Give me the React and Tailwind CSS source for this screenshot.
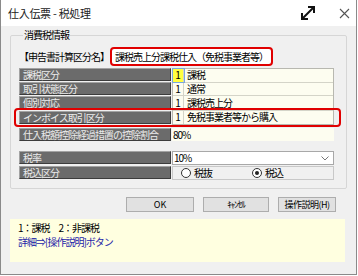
import React from 'react';

const font = { fontFamily: '"Noto Sans CJK JP", "Noto Sans", sans-serif' };

const Label = ({ children }) => (
  <div className="w-[152px] h-[13px] shrink-0 flex items-center pl-[3px] bg-[#6b6b6b] border border-t-[#a3a3a3] border-l-[#a3a3a3] border-b-[#3c3c3c] border-r-[#3c3c3c] text-[#ececec] text-[10px] tracking-[-1px] leading-none">
    {children}
  </div>
);

const CodeRow = ({ code, text, focused, tall }) => (
  <div className={`flex ${tall ? 'h-[15px]' : 'h-[14px]'} border-b border-[#d4d4c8] last:border-b-0`}>
    <div
      className={`w-[11px] shrink-0 flex items-center justify-center border-r border-[#d4d4c8] text-[10px] leading-none ${
        focused ? 'bg-[#ffff40] outline outline-1 outline-[#7aa7dc]' : ''
      }`}
    >
      {code}
    </div>
    <div className="flex-1 flex items-center pl-[3px] text-[10px] tracking-[-1px] leading-none">{text}</div>
  </div>
);

const MaxIcon = () => (
  <svg width="18" height="18" viewBox="0 0 18 18" fill="none" stroke="#111" strokeWidth="2">
    <path d="M3 15 L15 3" />
    <path d="M9 3 H15 V9" />
    <path d="M3 9 V15 H9" />
  </svg>
);

const CloseIcon = () => (
  <svg width="11" height="11" viewBox="0 0 11 11" stroke="#555" strokeWidth="1.1">
    <path d="M1 1 L10 10 M10 1 L1 10" />
  </svg>
);

export default function App() {
  return (
    <div className="w-[358px] h-[276px] bg-white text-black" style={font}>
      <div className="w-[357px] h-[275px] flex flex-col border-l border-r border-b border-[#8a8a8a]">
        {/* Title bar */}
        <div className="h-[26px] shrink-0 bg-white flex items-center pl-[7px] pr-[6px]">
          <span className="text-[11px] tracking-[-0.3px] text-[#222]">仕入伝票 - 税処理</span>
          <div className="ml-auto flex items-center gap-[22px]">
            <MaxIcon />
            <CloseIcon />
          </div>
        </div>

        {/* Body */}
        <div className="flex-1 bg-[#f0f0f0] flex flex-col px-[9px]">
          <fieldset className="mt-[3px] border border-[#d6d6d6] rounded-[2px] h-[160px] pl-[8px] pr-[12px]">
            <legend className="ml-[4px] px-[1px] text-[10px] tracking-[-1px] leading-[12px]">消費税情報</legend>

            <div className="flex items-center h-[19px] mt-[6px]">
              <span className="text-[10px] tracking-[-1px] leading-none">【申告書計算区分名】</span>
              <div className="ml-[1px] h-[19px] px-[3px] flex items-center border-2 border-[#e00000] rounded-[4px] bg-white text-[10px] tracking-[-1px] leading-none">
                課税売上分課税仕入（免税事業者等）
              </div>
            </div>

            <div className="mt-[2px] flex">
              <div className="flex flex-col gap-[1px]">
                <Label>課税区分</Label>
                <Label>取引状態区分</Label>
                <Label>個別対応</Label>
                <div className="relative mt-[1px]">
                  <Label>インボイス取引区分</Label>
                  <div className="absolute left-[-5px] top-[-3px] w-[327px] h-[19px] border-2 border-[#e00000] rounded-[4px] pointer-events-none z-10" />
                </div>
              </div>
              <div className="flex-1 ml-[1px] h-[57px] bg-[#fdfdf0] border border-[#b8b8b0] flex flex-col">
                <CodeRow code="1" text="課税" focused />
                <CodeRow code="1" text="通常" />
                <CodeRow code="1" text="課税売上分" tall />
                <CodeRow code="1" text="免税事業者等から購入" />
              </div>
            </div>

            <div className="mt-[3px] flex">
              <Label>仕入税額控除経過措置の控除割合</Label>
              <div className="flex-1 ml-[1px] bg-[#fdfdf0] flex items-center pl-[1px] text-[10px] tracking-[-1px] leading-none">80%</div>
            </div>

            <div className="mt-[10px] flex flex-col gap-[1px]">
              <div className="flex">
                <Label>税率</Label>
                <div className="flex-1 ml-[1px] h-[14px] bg-white border border-[#a8a8a8] flex items-center pl-[1px] pr-[4px] text-[10px] tracking-[-1px] leading-none">
                  10%
                  <svg className="ml-auto" width="8" height="5" viewBox="0 0 8 5" fill="none" stroke="#777" strokeWidth="1">
                    <path d="M0.5 0.5 L4 4 L7.5 0.5" />
                  </svg>
                </div>
              </div>
              <div className="flex">
                <Label>税込区分</Label>
                <div className="flex-1 ml-[1px] h-[14px] border border-[#c8c8c8] flex items-center pl-[8px] text-[10px] tracking-[-1px] leading-none">
                  <span className="w-[10px] h-[10px] rounded-full border border-[#333] bg-white" />
                  <span className="ml-[3px]">税抜</span>
                  <span className="ml-[40px] w-[10px] h-[10px] rounded-full border border-[#333] bg-white flex items-center justify-center">
                    <span className="w-[4px] h-[4px] rounded-full bg-[#222]" />
                  </span>
                  <span className="ml-[3px]">税込</span>
                </div>
              </div>
            </div>
          </fieldset>

          {/* Buttons */}
          <div className="mt-[8px] flex justify-end gap-[9px] pr-[11px]">
            <button className="w-[68px] h-[15px] bg-[#e1e1e1] border border-[#adadad] text-[9px] leading-none">OK</button>
            <button className="w-[66px] h-[15px] bg-[#e1e1e1] border border-[#adadad] text-[9px] leading-none tracking-[-1px]">ｷｬﾝｾﾙ</button>
            <button className="w-[58px] h-[15px] bg-[#e1e1e1] border border-[#adadad] text-[9px] leading-none tracking-[-0.5px]">操作説明(H)</button>
          </div>

          {/* Help */}
          <div className="mt-[7px] w-[335px] h-[43px] bg-[#ffffe0] pl-[8px] pt-[2px] text-[10px] tracking-[-1px] leading-[14px]">
            <div>1：課税　2：非課税</div>
            <div className="text-[#2424a8]">詳細⇒[操作説明]ボタン</div>
          </div>
        </div>
      </div>
    </div>
  );
}
